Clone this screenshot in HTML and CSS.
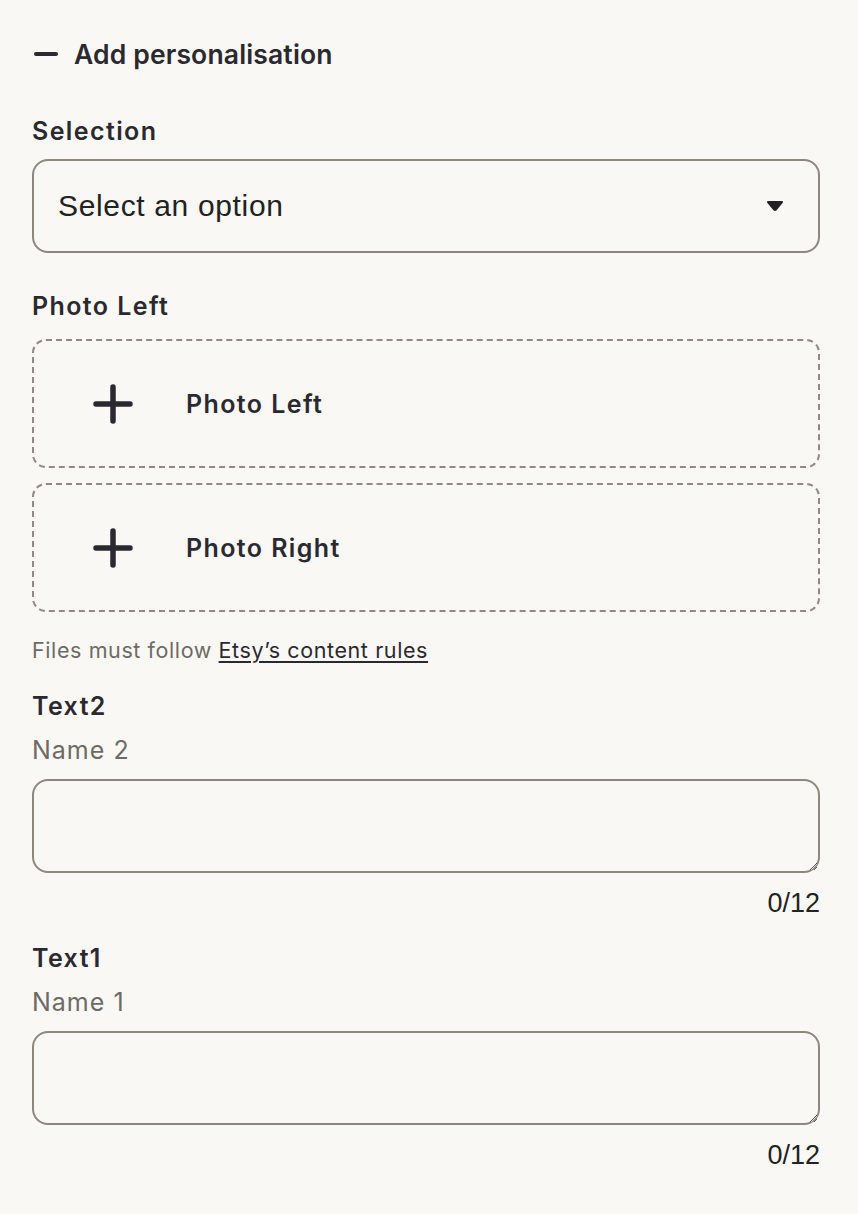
FILE: index.html
```html
<!DOCTYPE html>
<html lang="en">
<head>
    <meta charset="UTF-8">
    <meta name="viewport" content="width=device-width, initial-scale=1.0">
    <title>Add personalisation</title>
    <link rel="stylesheet" href="styles.css">
</head>
<body>
    <div class="personalisation">
        <div class="toggle">
            <svg class="toggle-icon" width="26" height="6" viewBox="0 0 26 6">
                <line x1="3" y1="3" x2="23" y2="3" stroke="#2a2930" stroke-width="4" stroke-linecap="round"/>
            </svg>
            <span>Add personalisation</span>
        </div>

        <div class="field first">
            <div class="label">Selection</div>
            <div class="select">
                <span>Select an option</span>
                <svg width="18" height="12" viewBox="0 0 18 12">
                    <path d="M2 2 L16 2 L9.8 9.6 Q9 10.5 8.2 9.6 Z" fill="#222" stroke="#222" stroke-width="2" stroke-linejoin="round"/>
                </svg>
            </div>
        </div>

        <div class="field">
            <div class="label">Photo Left</div>
            <div class="uploads">
                <div class="upload">
                    <svg class="plus" width="40" height="40" viewBox="0 0 40 40">
                        <path d="M20 3 V37 M3 20 H37" stroke="#2a2930" stroke-width="5.5" stroke-linecap="round"/>
                    </svg>
                    <span>Photo Left</span>
                </div>
                <div class="upload">
                    <svg class="plus" width="40" height="40" viewBox="0 0 40 40">
                        <path d="M20 3 V37 M3 20 H37" stroke="#2a2930" stroke-width="5.5" stroke-linecap="round"/>
                    </svg>
                    <span>Photo Right</span>
                </div>
            </div>
            <div class="rules">Files must follow <a href="#">Etsy’s content rules</a></div>
        </div>

        <div class="field text-field">
            <div class="label">Text2</div>
            <div class="hint">Name 2</div>
            <textarea rows="2" maxlength="12"></textarea>
            <div class="counter">0/12</div>
        </div>

        <div class="field text-field next">
            <div class="label">Text1</div>
            <div class="hint">Name 1</div>
            <textarea rows="2" maxlength="12"></textarea>
            <div class="counter">0/12</div>
        </div>
    </div>
</body>
</html>
```

FILE: styles.css
```css
body {
    margin: 0;
    background: #faf8f4;
    font-family: Inter, 'Helvetica Neue', Arial, sans-serif;
    color: #2a2930;
}
.personalisation {
    padding: 36px 38px 0 32px;
    display: flex;
    flex-direction: column;
}
.toggle {
    display: flex;
    align-items: center;
    height: 36px;
    font-size: 26.5px;
    font-weight: 600;
    letter-spacing: 0.15px;
}
.toggle-icon {
    margin-left: 1px;
    margin-right: 15px;
}
.field {
    display: flex;
    flex-direction: column;
    margin-top: 37px;
}
.field.first {
    margin-top: 43px;
}
.label {
    font-size: 25px;
    font-weight: 600;
    letter-spacing: 1.4px;
    line-height: 32px;
}
.select {
    margin-top: 12px;
    height: 94px;
    box-sizing: border-box;
    border: 2px solid #8c877f;
    border-radius: 16px;
    display: flex;
    align-items: center;
    justify-content: space-between;
    padding: 0 34px 0 24px;
    font-family: 'Liberation Sans', Arial, sans-serif;
    font-size: 30px;
    letter-spacing: 0.65px;
    color: #222;
}
.uploads {
    margin-top: 17px;
    display: flex;
    flex-direction: column;
    gap: 15px;
}
.upload {
    height: 129px;
    box-sizing: border-box;
    border: 2px dashed #8e8a85;
    border-radius: 14px;
    display: flex;
    align-items: center;
    padding-left: 59px;
    font-size: 25px;
    font-weight: 600;
    letter-spacing: 1.4px;
}
.plus {
    margin-right: 53px;
}
.rules {
    margin-top: 23px;
    font-size: 21.5px;
    letter-spacing: 0.6px;
    line-height: 30px;
    color: #6e6a66;
}
.rules a {
    color: #2a2930;
    text-decoration: underline;
    text-underline-offset: 3px;
}
.text-field {
    margin-top: 25px;
}
.text-field.next {
    margin-top: 23px;
}
.hint {
    margin-top: 12px;
    font-size: 25px;
    letter-spacing: 1px;
    line-height: 32px;
    color: #6e6a66;
}
textarea {
    margin-top: 13px;
    height: 94px;
    box-sizing: border-box;
    border: 2px solid #8c877f;
    border-radius: 16px;
    background: transparent;
    resize: vertical;
    padding: 12px 20px;
    font-family: 'Liberation Sans', Arial, sans-serif;
    font-size: 24px;
}
.counter {
    margin-top: 14px;
    text-align: right;
    font-family: 'Liberation Sans', Arial, sans-serif;
    font-size: 27px;
    line-height: 32px;
    color: #222;
}
```
